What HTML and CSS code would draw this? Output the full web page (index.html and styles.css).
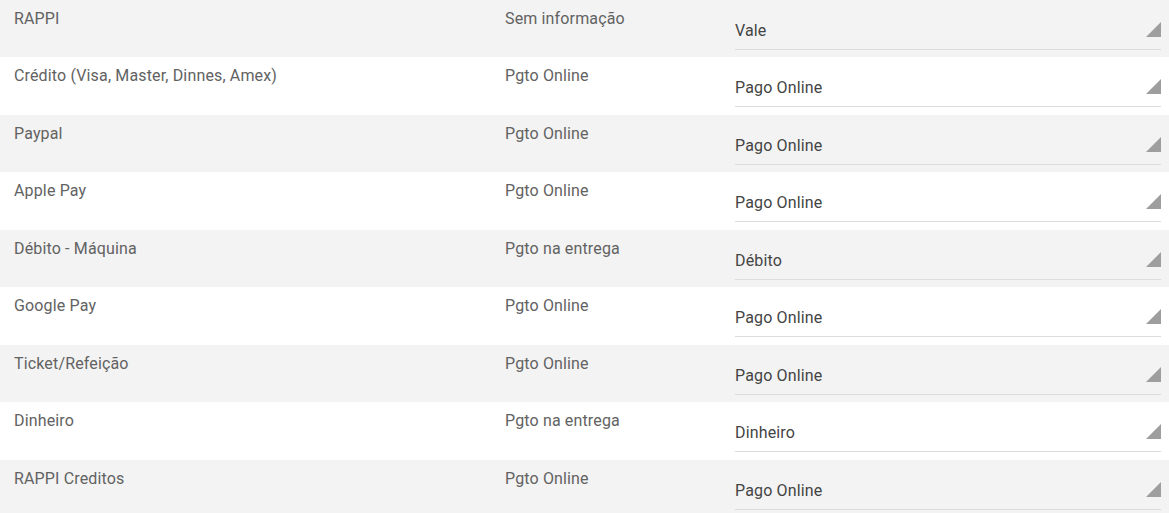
FILE: index.html
```html
<!DOCTYPE html>
<html lang="pt-BR">
<head>
<meta charset="utf-8">
<title>Formas de pagamento</title>
<link rel="stylesheet" href="styles.css">
</head>
<body>
<div class="table">
  <div class="row"><div class="name">RAPPI</div><div class="type">Sem informação</div><div class="cell-select"><div class="select"><span>Vale</span><svg class="caret" viewBox="0 0 15 15"><polygon points="15,0 15,15 0,15"/></svg></div></div></div>
  <div class="row"><div class="name">Crédito (Visa, Master, Dinnes, Amex)</div><div class="type">Pgto Online</div><div class="cell-select"><div class="select"><span>Pago Online</span><svg class="caret" viewBox="0 0 15 15"><polygon points="15,0 15,15 0,15"/></svg></div></div></div>
  <div class="row"><div class="name">Paypal</div><div class="type">Pgto Online</div><div class="cell-select"><div class="select"><span>Pago Online</span><svg class="caret" viewBox="0 0 15 15"><polygon points="15,0 15,15 0,15"/></svg></div></div></div>
  <div class="row"><div class="name">Apple Pay</div><div class="type">Pgto Online</div><div class="cell-select"><div class="select"><span>Pago Online</span><svg class="caret" viewBox="0 0 15 15"><polygon points="15,0 15,15 0,15"/></svg></div></div></div>
  <div class="row"><div class="name">Débito - Máquina</div><div class="type">Pgto na entrega</div><div class="cell-select"><div class="select"><span>Débito</span><svg class="caret" viewBox="0 0 15 15"><polygon points="15,0 15,15 0,15"/></svg></div></div></div>
  <div class="row"><div class="name">Google Pay</div><div class="type">Pgto Online</div><div class="cell-select"><div class="select"><span>Pago Online</span><svg class="caret" viewBox="0 0 15 15"><polygon points="15,0 15,15 0,15"/></svg></div></div></div>
  <div class="row"><div class="name">Ticket/Refeição</div><div class="type">Pgto Online</div><div class="cell-select"><div class="select"><span>Pago Online</span><svg class="caret" viewBox="0 0 15 15"><polygon points="15,0 15,15 0,15"/></svg></div></div></div>
  <div class="row"><div class="name">Dinheiro</div><div class="type">Pgto na entrega</div><div class="cell-select"><div class="select"><span>Dinheiro</span><svg class="caret" viewBox="0 0 15 15"><polygon points="15,0 15,15 0,15"/></svg></div></div></div>
  <div class="row"><div class="name">RAPPI Creditos</div><div class="type">Pgto Online</div><div class="cell-select"><div class="select"><span>Pago Online</span><svg class="caret" viewBox="0 0 15 15"><polygon points="15,0 15,15 0,15"/></svg></div></div></div>
</div>
</body>
</html>
```

FILE: styles.css
```css
html, body {
  margin: 0;
  padding: 0;
  background: #ffffff;
}

body {
  font-family: Roboto, "Liberation Sans", sans-serif;
  font-size: 16px;
  line-height: 20px;
  letter-spacing: 0.15px;
}

.table {
  display: flex;
  flex-direction: column;
  margin-top: -0.25px;
}

.row {
  display: grid;
  grid-template-columns: 491px 230px 1fr;
  padding: 9px 8px 0 14px;
  height: 57.5px;
  box-sizing: border-box;
  background: #ffffff;
}

.row:nth-child(odd) {
  background: #f3f3f3;
}

.name,
.type {
  color: #626262;
}

.select {
  display: flex;
  justify-content: space-between;
  align-items: flex-end;
  padding: 12px 0 8px;
  border-bottom: 1px solid #dcdcdc;
  color: #444444;
}

.caret {
  width: 15px;
  height: 15px;
  margin-bottom: 4px;
  fill: #9e9e9e;
  display: block;
}
```
